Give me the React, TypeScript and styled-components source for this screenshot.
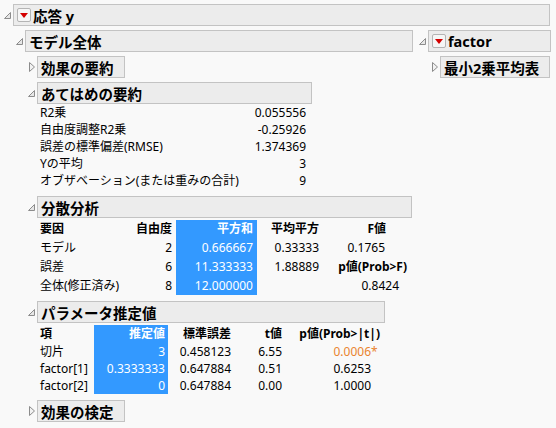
import React from 'react';
import styled, { createGlobalStyle } from 'styled-components';

const GlobalStyle = createGlobalStyle`
  html, body {
    margin: 0;
    padding: 0;
    background: #f9f9f9;
  }
  body {
    font-family: 'Noto Sans', 'Noto Sans CJK JP', sans-serif;
    font-size: 12px;
    color: #000;
  }
`;

const Page = styled.div`
  padding: 4px 0 0 3px;
`;

const OutlineBox = styled.div`
  display: flex;
  flex-direction: column;
`;

const Head = styled.div`
  display: flex;
  align-items: center;
  height: 22px;
`;

const ToggleSlot = styled.div`
  width: 10px;
  height: 22px;
  flex: none;
  display: flex;
  align-items: center;
`;

const TitleBox = styled.div<{ $w: number }>`
  box-sizing: border-box;
  width: ${p => p.$w}px;
  height: 22px;
  display: flex;
  align-items: center;
  gap: 2px;
  padding-left: 3px;
  background: #ececec;
  border: 1px solid #c3c3c3;
  font-size: 14.5px;
  font-weight: bold;
  white-space: nowrap;
  overflow: hidden;
`;

const MenuBtn = styled.span`
  box-sizing: border-box;
  width: 14px;
  height: 14px;
  flex: none;
  display: flex;
  align-items: center;
  justify-content: center;
  border: 1px solid #b4b4b4;
  border-radius: 2px;
  background: #f6f6f6;
`;

const Body = styled.div`
  display: flex;
  flex-direction: column;
  gap: 4px;
  padding-left: 12px;
  margin-top: 4px;
`;

const Columns = styled.div`
  display: flex;
  align-items: flex-start;
  gap: 5px;
`;

const Grid = styled.table<{ $w: number; $mt: number; $mb: number }>`
  border-collapse: collapse;
  border-spacing: 0;
  table-layout: fixed;
  width: ${p => p.$w}px;
  margin: ${p => p.$mt}px 0 ${p => p.$mb}px 13px;
`;

const Col = styled.col<{ $w: number }>`
  width: ${p => p.$w}px;
`;

const Cell = styled.td<{ $h: number; $right?: boolean; $pr?: number; $hl?: boolean; $bold?: boolean; $tone?: string }>`
  height: ${p => p.$h}px;
  line-height: ${p => p.$h}px;
  padding: 0 ${p => p.$pr ?? 0}px 0 0;
  text-align: ${p => (p.$right ? 'right' : 'left')};
  vertical-align: middle;
  white-space: nowrap;
  font-weight: ${p => (p.$bold ? 'bold' : 'normal')};
  background: ${p => (p.$hl ? '#3399ff' : 'transparent')};
  color: ${p => (p.$hl ? '#fff' : p.$tone ?? '#000')};
`;

const Star = styled.span`
  display: inline-block;
  width: 0;
  overflow: visible;
`;

function OpenTri() {
  return (
    <svg width="9" height="9" viewBox="0 0 9 9">
      <polygon points="7.5,1.5 7.5,7.5 1.5,7.5" fill="#e6e6e6" stroke="#8c8c8c" strokeWidth="1" />
    </svg>
  );
}

function ClosedTri() {
  return (
    <svg width="9" height="12" viewBox="0 0 9 12">
      <polygon points="2.5,1.5 7.5,6 2.5,10.5" fill="#f2f2f2" stroke="#8c8c8c" strokeWidth="1" />
    </svg>
  );
}

function MenuButton() {
  return (
    <MenuBtn>
      <svg width="8" height="5" viewBox="0 0 8 5">
        <polygon points="0,0 8,0 4,5" fill="#d40000" />
      </svg>
    </MenuBtn>
  );
}

type OutlineProps = {
  title: string;
  width: number;
  open?: boolean;
  menu?: boolean;
  children?: React.ReactNode;
};

function Outline({ title, width, open, menu, children }: OutlineProps) {
  return (
    <OutlineBox>
      <Head>
        <ToggleSlot>{open ? <OpenTri /> : <ClosedTri />}</ToggleSlot>
        <TitleBox $w={width}>
          {menu && <MenuButton />}
          {title}
        </TitleBox>
      </Head>
      {open && children}
    </OutlineBox>
  );
}

const fitRows = [
  ['R2乗', '0.055556'],
  ['自由度調整R2乗', '-0.25926'],
  ['誤差の標準偏差(RMSE)', '1.374369'],
  ['Yの平均', '3'],
  ['オブザベーション(または重みの合計)', '9'],
];

function FitSummary() {
  return (
    <Grid $w={269} $mt={0} $mb={3}>
      <colgroup>
        <Col $w={210} />
        <Col $w={59} />
      </colgroup>
      <tbody>
        {fitRows.map(([label, value]) => (
          <tr key={label}>
            <Cell $h={17}>{label}</Cell>
            <Cell $h={17} $right $pr={3}>{value}</Cell>
          </tr>
        ))}
      </tbody>
    </Grid>
  );
}

function Anova() {
  return (
    <Grid $w={370} $mt={2} $mb={2}>
      <colgroup>
        <Col $w={90} />
        <Col $w={46} />
        <Col $w={81} />
        <Col $w={66} />
        <Col $w={87} />
      </colgroup>
      <tbody>
        <tr>
          <Cell $h={18} $bold>要因</Cell>
          <Cell $h={18} $bold $right $pr={4}>自由度</Cell>
          <Cell $h={18} $bold $right $pr={4} $hl>平方和</Cell>
          <Cell $h={18} $bold $right $pr={4}>平均平方</Cell>
          <Cell $h={18} $bold $right $pr={24}>F値</Cell>
        </tr>
        <tr>
          <Cell $h={19}>モデル</Cell>
          <Cell $h={19} $right $pr={4}>2</Cell>
          <Cell $h={19} $right $pr={4} $hl>0.666667</Cell>
          <Cell $h={19} $right $pr={4}>0.33333</Cell>
          <Cell $h={19} $right $pr={25}>0.1765</Cell>
        </tr>
        <tr>
          <Cell $h={19}>誤差</Cell>
          <Cell $h={19} $right $pr={4}>6</Cell>
          <Cell $h={19} $right $pr={4} $hl>11.333333</Cell>
          <Cell $h={19} $right $pr={4}>1.88889</Cell>
          <Cell $h={19} $right $pr={3} $bold>p値(Prob&gt;F)</Cell>
        </tr>
        <tr>
          <Cell $h={19}>全体(修正済み)</Cell>
          <Cell $h={19} $right $pr={4}>8</Cell>
          <Cell $h={19} $right $pr={4} $hl>12.000000</Cell>
          <Cell $h={19} $right $pr={4}></Cell>
          <Cell $h={19} $right $pr={11}>0.8424</Cell>
        </tr>
      </tbody>
    </Grid>
  );
}

const estRows = [
  { term: '切片', est: '3', se: '0.458123', t: '6.55', p: '0.0006', sig: true },
  { term: 'factor[1]', est: '0.3333333', se: '0.647884', t: '0.51', p: '0.6253', sig: false },
  { term: 'factor[2]', est: '0', se: '0.647884', t: '0.00', p: '1.0000', sig: false },
];

function Estimates() {
  return (
    <Grid $w={343} $mt={2} $mb={2}>
      <colgroup>
        <Col $w={54} />
        <Col $w={74} />
        <Col $w={66} />
        <Col $w={51} />
        <Col $w={98} />
      </colgroup>
      <tbody>
        <tr>
          <Cell $h={18} $bold>項</Cell>
          <Cell $h={18} $bold $right $pr={3} $hl>推定値</Cell>
          <Cell $h={18} $bold $right $pr={3}>標準誤差</Cell>
          <Cell $h={18} $bold $right $pr={3}>t値</Cell>
          <Cell $h={18} $bold $right $pr={3}>p値(Prob&gt;|t|)</Cell>
        </tr>
        {estRows.map(r => (
          <tr key={r.term}>
            <Cell $h={17}>{r.term}</Cell>
            <Cell $h={17} $right $pr={3} $hl>{r.est}</Cell>
            <Cell $h={17} $right $pr={3}>{r.se}</Cell>
            <Cell $h={17} $right $pr={3}>{r.t}</Cell>
            <Cell $h={17} $right $pr={12} $tone={r.sig ? '#e9842f' : undefined}>
              {r.p}
              {r.sig && <Star>*</Star>}
            </Cell>
          </tr>
        ))}
      </tbody>
    </Grid>
  );
}

export default function App() {
  return (
    <>
      <GlobalStyle />
      <Page>
        <Outline title="応答 y" width={537} open menu>
          <Body>
            <Columns>
              <Outline title="モデル全体" width={388} open>
                <Body>
                  <Outline title="効果の要約" width={88} />
                  <Outline title="あてはめの要約" width={275} open>
                    <FitSummary />
                  </Outline>
                  <Outline title="分散分析" width={375} open>
                    <Anova />
                  </Outline>
                  <Outline title="パラメータ推定値" width={348} open>
                    <Estimates />
                  </Outline>
                  <Outline title="効果の検定" width={88} />
                </Body>
              </Outline>
              <Outline title="factor" width={123} open menu>
                <Body>
                  <Outline title="最小2乗平均表" width={110} />
                </Body>
              </Outline>
            </Columns>
          </Body>
        </Outline>
      </Page>
    </>
  );
}
